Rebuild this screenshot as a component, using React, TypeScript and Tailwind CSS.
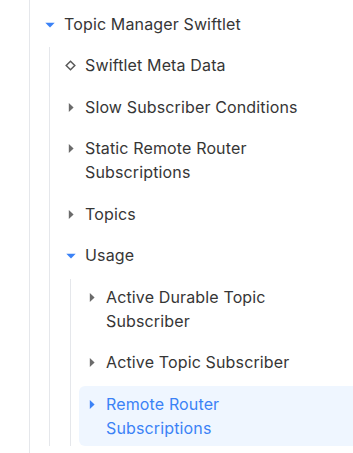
type Node = {
  label: string;
  open?: boolean;
  leaf?: boolean;
  selected?: boolean;
  children?: Node[];
};

const tree: Node[] = [
  {
    label: 'Topic Manager Swiftlet',
    open: true,
    children: [
      { label: 'Swiftlet Meta Data', leaf: true },
      { label: 'Slow Subscriber Conditions' },
      { label: 'Static Remote Router Subscriptions' },
      { label: 'Topics' },
      {
        label: 'Usage',
        open: true,
        children: [
          { label: 'Active Durable Topic Subscriber' },
          { label: 'Active Topic Subscriber' },
          { label: 'Remote Router Subscriptions', selected: true },
        ],
      },
    ],
  },
];

function NodeIcon({ node }: { node: Node }) {
  if (node.leaf) {
    return (
      <svg width="11" height="11" viewBox="0 0 11 11" fill="none">
        <polygon points="5.5,1.2 9.8,5.5 5.5,9.8 1.2,5.5" stroke="#5a5a5a" strokeWidth="1.5" />
      </svg>
    );
  }
  if (node.open) {
    return (
      <svg width="10" height="10" viewBox="0 0 10 10" className="translate-y-[1px]">
        <polygon points="0.3,2.8 9.7,2.8 5,7.5" fill="#3b82f6" />
      </svg>
    );
  }
  return (
    <svg width="10" height="10" viewBox="0 0 10 10" className="translate-y-[0.5px]">
      <polygon points="2.8,0.5 7.6,5 2.8,9.5" fill={node.selected ? '#3b82f6' : '#6b6b6b'} />
    </svg>
  );
}

function TreeNode({ node }: { node: Node }) {
  return (
    <li className="flex flex-col gap-[5.5px]">
      <div
        className={
          node.selected
            ? 'flex items-start py-1.5 pr-[36px] rounded-l-md bg-blue-50 text-[#3b82f6]'
            : 'flex items-start py-1.5 pr-[36px] text-[#363636]'
        }
      >
        <span className="flex h-6 w-[25px] shrink-0 items-center justify-center">
          <NodeIcon node={node} />
        </span>
        <span className="pl-[2px] leading-6 tracking-[0.14px]">{node.label}</span>
      </div>
      {node.open && node.children && (
        <ul className="ml-[12px] flex flex-col gap-[5.5px] border-l border-[#e5e7eb] pl-2">
          {node.children.map((child, i) => (
            <TreeNode key={i} node={child} />
          ))}
        </ul>
      )}
    </li>
  );
}

export default function App() {
  return (
    <div className="h-[453px] w-[353px] overflow-hidden bg-white font-[Inter,sans-serif] text-base">
      <ul className="ml-[29px] h-full border-l border-[#e5e7eb] pl-[7px] pt-[5.5px]">
        {tree.map((node, i) => (
          <TreeNode key={i} node={node} />
        ))}
      </ul>
    </div>
  );
}
